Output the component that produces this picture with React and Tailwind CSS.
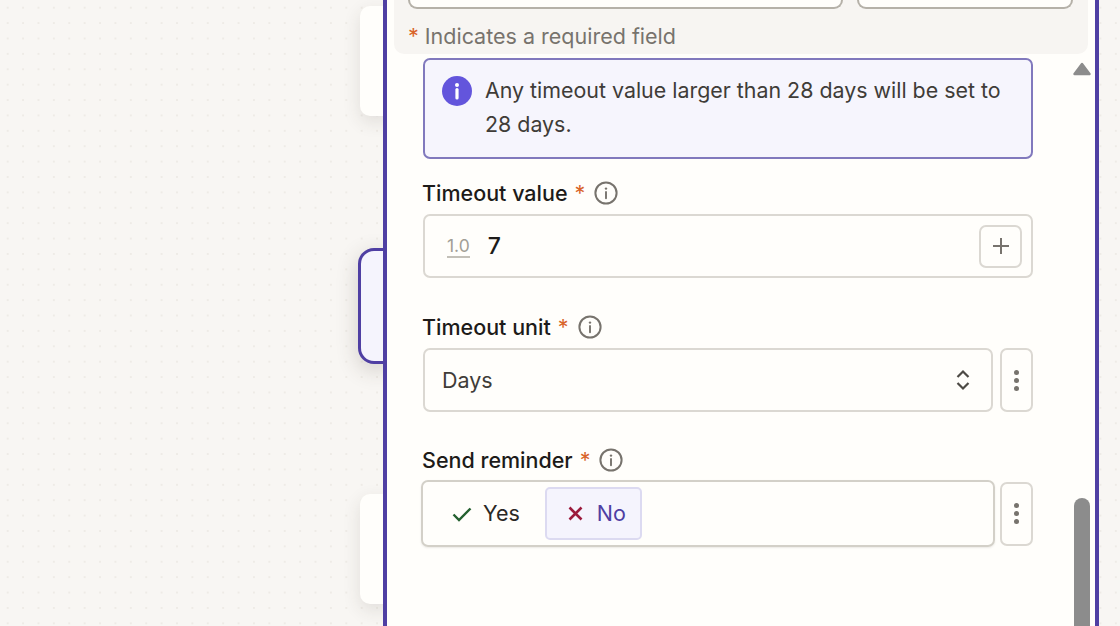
import React from "react";

function Info({ className = "" }) {
  return (
    <svg width="24" height="24" viewBox="0 0 24 24" fill="none" className={className}>
      <circle cx="12" cy="12" r="10.6" stroke="#77736d" strokeWidth="2" />
      <circle cx="12" cy="7.6" r="1.2" fill="#77736d" />
      <path d="M12 11v6.2" stroke="#77736d" strokeWidth="1.9" strokeLinecap="round" />
    </svg>
  );
}

function Label({ children }) {
  return (
    <div className="flex h-[24px] items-center text-[21.5px] font-[450] leading-[24px] text-[#1d1b19]">
      <span className="-ml-px">{children}</span>
      <span className="ml-[7px] font-normal text-[#d9642a]">*</span>
      <Info className="ml-[9px]" />
    </div>
  );
}

function Dots() {
  return (
    <span className="flex flex-col gap-[3px]">
      <span className="size-[5px] rounded-full bg-[#77736d]" />
      <span className="size-[5px] rounded-full bg-[#77736d]" />
      <span className="size-[5px] rounded-full bg-[#77736d]" />
    </span>
  );
}

function MenuBtn({ className = "" }) {
  return (
    <div className={"-ml-px flex w-[33px] items-center justify-center rounded-[7px] border-2 border-[#dbd8d2] bg-[#fffefb] pr-px " + className}>
      <Dots />
    </div>
  );
}

export default function App() {
  return (
    <div className="flex h-[626px] w-[1120px] overflow-hidden bg-[#f8f6f3] bg-[radial-gradient(#eeebe6_1px,transparent_1.3px)] bg-[length:15.4px_15.4px] font-['Inter',sans-serif]">
      <div className="relative h-full w-[383px] shrink-0">
        <div className="absolute left-[360px] top-[6px] h-[110px] w-[30px] rounded-l-[10px] bg-[#fffefb] shadow-[0_6px_18px_rgba(60,50,40,0.12)]" />
        <div className="absolute left-[358px] top-[248px] h-[116px] w-[32px] rounded-l-[16px] border-[3px] border-[#4f3fa3] bg-[#f5f4fd] shadow-[0_6px_22px_rgba(60,50,40,0.2)]" />
        <div className="absolute left-[360px] top-[494px] h-[110px] w-[30px] rounded-l-[10px] bg-[#fffefb] shadow-[0_6px_18px_rgba(60,50,40,0.12)]" />
      </div>

      <div className="relative z-10 flex h-[640px] w-[716px] shrink-0 flex-col border-x-[4px] border-[#4f3fa3] bg-[#fffefb]">
        <div className="ml-[7px] h-[54px] w-[694px] rounded-b-[10px] bg-[#f7f5f2] pl-[14px]">
          <div className="flex gap-[14px]">
            <div className="h-[9px] w-[435px] rounded-b-[9px] border-x-2 border-b-2 border-[#b5b1a8] bg-[#fffefb]" />
            <div className="h-[9px] w-[216px] rounded-b-[9px] border-x-2 border-b-2 border-[#b5b1a8] bg-[#fffefb]" />
          </div>
          <div className="mt-[15px] flex h-[24px] items-center text-[21.5px] leading-[24px] text-[#77736d]">
            <span className="mr-[6px] text-[#d9642a]">*</span>
            Indicates a required field
          </div>
        </div>

        <div className="flex min-h-0 flex-1">
          <div className="ml-[36px] mt-[4px] w-[610px] shrink-0">
            <div className="flex h-[101px] gap-[13px] rounded-[7px] border-2 border-[#8179bd] bg-[#f6f5fd] pl-[17px] pt-[16px]">
              <svg width="30" height="30" viewBox="0 0 30 30" className="shrink-0">
                <circle cx="15" cy="15" r="15" fill="#6355dc" />
                <circle cx="15" cy="9" r="2" fill="#fff" />
                <path d="M15 13.5v8.5" stroke="#fff" strokeWidth="3.2" strokeLinecap="round" />
              </svg>
              <p className="-mt-[2px] w-[530px] text-[21.4px] leading-[33.5px] text-[#3f3c38]">
                Any timeout value larger than 28 days will be set to 28 days.
              </p>
            </div>

            <div className="mt-[22px]">
              <Label>Timeout value</Label>
            </div>
            <div className="mt-[9px] flex h-[64px] items-center rounded-[7px] border-2 border-[#dbd8d2] pl-[22px] pr-[9px]">
              <span className="mt-[2px] border-b-2 border-[#c3c0b8] pb-[1px] text-[17.5px] leading-[18px] text-[#a29e96]">1.0</span>
              <span className="ml-[18px] text-[23px] font-medium text-[#1d1b19]">7</span>
              <div className="ml-auto flex size-[43px] items-center justify-center rounded-[7px] border-2 border-[#dbd8d2]">
                <svg width="20" height="20" viewBox="0 0 20 20" fill="none">
                  <path d="M10 2v16M2 10h16" stroke="#77736d" strokeWidth="2" />
                </svg>
              </div>
            </div>

            <div className="mt-[37px]">
              <Label>Timeout unit</Label>
            </div>
            <div className="mt-[9px] flex h-[64px] gap-[8px]">
              <div className="flex w-[570px] items-center justify-between rounded-[7px] border-2 border-[#dbd8d2] pl-[17px] pr-[20px] text-[21.5px] text-[#3f3c38]">
                Days
                <svg width="16" height="22" viewBox="0 0 16 22" fill="none">
                  <path d="M2.5 8 8 2.5 13.5 8M2.5 14 8 19.5 13.5 14" stroke="#4d4a45" strokeWidth="2.2" />
                </svg>
              </div>
              <MenuBtn />
            </div>

            <div className="mt-[36px]">
              <Label>Send reminder</Label>
            </div>
            <div className="-ml-[2px] mt-[8px] flex items-center gap-[6px]">
              <div className="flex h-[67px] w-[574px] items-center gap-[25px] rounded-[7px] border-2 border-[#d3d0c8] pl-[29px] shadow-[0_1px_2px_rgba(60,50,40,0.1)]">
                <span className="flex items-center gap-[11px] text-[21.5px] text-[#2a2825]">
                  <svg width="20" height="16" viewBox="0 0 20 16" fill="none">
                    <path d="M1.5 8.5 7 14 18.5 2.5" stroke="#24602f" strokeWidth="2.4" />
                  </svg>
                  Yes
                </span>
                <span className="flex h-[53px] w-[97px] items-center gap-[14px] rounded-[5px] border-2 border-[#dcdaf1] bg-[#f5f4fd] pl-[21px] text-[21.5px] text-[#4f3fa3]">
                  <svg width="15" height="15" viewBox="0 0 15 15" fill="none">
                    <path d="M1.5 1.5 13.5 13.5M13.5 1.5 1.5 13.5" stroke="#9c1b3c" strokeWidth="2.6" />
                  </svg>
                  No
                </span>
              </div>
              <MenuBtn className="h-[64px]" />
            </div>
          </div>

          <div className="relative ml-[41px] w-[16px]">
            <svg width="18" height="14" viewBox="0 0 18 14" className="absolute -left-[1px] top-[8px]">
              <path d="M9 2 16.5 12H1.5Z" fill="#8c8c8c" stroke="#8c8c8c" strokeWidth="2.4" strokeLinejoin="round" />
            </svg>
            <div className="absolute left-0 top-[444px] h-[170px] w-[16px] rounded-full bg-[#8c8c8c]" />
          </div>
        </div>
      </div>
    </div>
  );
}
